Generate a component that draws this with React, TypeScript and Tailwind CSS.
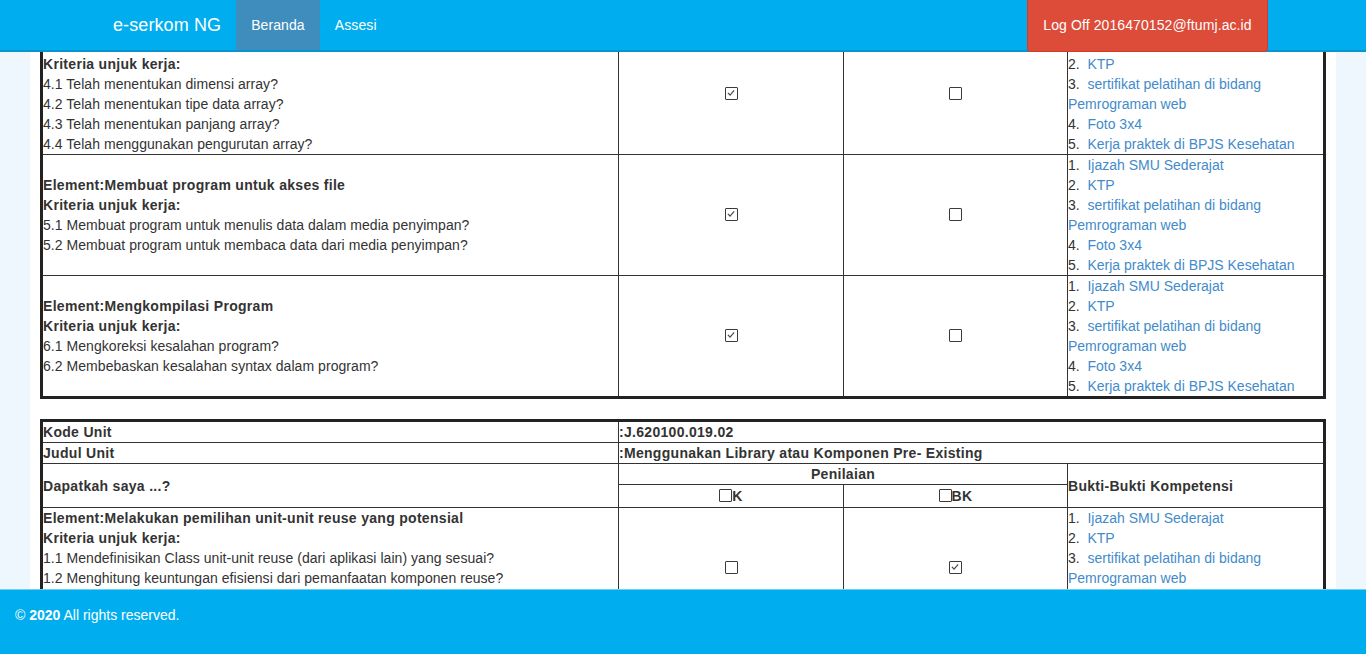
import React from "react";

type Row = {
  lines: { text: string; bold?: boolean }[];
  k: boolean;
  bk: boolean;
};

const evidence = [
  "Ijazah SMU Sederajat",
  "KTP",
  "sertifikat pelatihan di bidang Pemrograman web",
  "Foto 3x4",
  "Kerja praktek di BPJS Kesehatan",
];

const firstRows: Row[] = [
  {
    lines: [
      { text: "Element:Menggunakan array", bold: true },
      { text: "Kriteria unjuk kerja:", bold: true },
      { text: "4.1 Telah menentukan dimensi array?" },
      { text: "4.2 Telah menentukan tipe data array?" },
      { text: "4.3 Telah menentukan panjang array?" },
      { text: "4.4 Telah menggunakan pengurutan array?" },
    ],
    k: true,
    bk: false,
  },
  {
    lines: [
      { text: "Element:Membuat program untuk akses file", bold: true },
      { text: "Kriteria unjuk kerja:", bold: true },
      { text: "5.1 Membuat program untuk menulis data dalam media penyimpan?" },
      { text: "5.2 Membuat program untuk membaca data dari media penyimpan?" },
    ],
    k: true,
    bk: false,
  },
  {
    lines: [
      { text: "Element:Mengkompilasi Program", bold: true },
      { text: "Kriteria unjuk kerja:", bold: true },
      { text: "6.1 Mengkoreksi kesalahan program?" },
      { text: "6.2 Membebaskan kesalahan syntax dalam program?" },
    ],
    k: true,
    bk: false,
  },
];

const secondRows: Row[] = [
  {
    lines: [
      { text: "Element:Melakukan pemilihan unit-unit reuse yang potensial", bold: true },
      { text: "Kriteria unjuk kerja:", bold: true },
      { text: "1.1 Mendefinisikan Class unit-unit reuse (dari aplikasi lain) yang sesuai?" },
      { text: "1.2 Menghitung keuntungan efisiensi dari pemanfaatan komponen reuse?" },
      { text: "1.3 Menentukan komponen reuse yang sesuai?" },
      { text: "1.4 Mengidentifikasi lisensi komponen reuse?" },
    ],
    k: false,
    bk: true,
  },
];

function Box({ checked }: { checked?: boolean }) {
  return (
    <span className="inline-block h-[13px] w-[13px] border border-[#3b3b3b] bg-white rounded-[1px] align-middle">
      {checked && (
        <svg viewBox="0 0 13 13" className="h-[11px] w-[11px]">
          <path d="M2.2 5.8 L4.8 8.3 L9.6 2.8" fill="none" stroke="#4a4a4a" strokeWidth="1.4" />
        </svg>
      )}
    </span>
  );
}

function Evidence() {
  return (
    <>
      {evidence.map((item, i) => (
        <div key={item}>
          {i + 1}.&nbsp;&nbsp;<a className="text-[#428bca]">{item}</a>
        </div>
      ))}
    </>
  );
}

function BodyRow({ row }: { row: Row }) {
  return (
    <tr>
      <td className="border border-[#333] align-middle">
        {row.lines.map((l) => (
          <div key={l.text} className={l.bold ? "font-bold tracking-[0.3px]" : "tracking-[0.05px]"}>
            {l.text}
          </div>
        ))}
      </td>
      <td className="border border-[#333] pt-[1px] text-center align-middle">
        <span className="inline-flex items-center"><Box checked={row.k} /></span>
      </td>
      <td className="border border-[#333] pt-[1px] text-center align-middle">
        <span className="inline-flex items-center"><Box checked={row.bk} /></span>
      </td>
      <td className="border border-[#333] align-middle">
        <Evidence />
      </td>
    </tr>
  );
}

function Cols() {
  return (
    <colgroup>
      <col className="w-[577px]" />
      <col className="w-[225px]" />
      <col className="w-[224px]" />
      <col />
    </colgroup>
  );
}

export default function App() {
  return (
    <div className="flex h-[654px] flex-col overflow-hidden bg-[#edf7fd] font-['Liberation_Sans',Arial,sans-serif] text-[14px] leading-[20px] text-[#333]">
      <header className="h-[52px] shrink-0 border-b-2 border-[#0a94cc] bg-[#00aeef]">
        <div className="mx-auto flex h-[50px] w-[1170px] items-start px-[15px] tracking-[0.1px]">
          <a className="-ml-[15px] px-[15px] text-[18px] leading-[50px] text-white">e-serkom NG</a>
          <a className="bg-[#3e8dbd] px-[15px] leading-[50px] text-white">Beranda</a>
          <a className="px-[15px] leading-[50px] text-white">Assesi</a>
          <a className="-mr-[15px] ml-auto h-[52px] w-[241px] rounded-b-[4px] border border-t-0 border-[#d33a27] bg-[#dd4b39] text-center leading-[51px] text-white">
            Log Off 2016470152@ftumj.ac.id
          </a>
        </div>
      </header>

      <main className="min-h-0 flex-1 overflow-hidden px-[30px]">
        <div className="flow-root h-full bg-white px-[10px]">
          <div className="-mt-[21px]">
            <table className="mb-[20px] w-full table-fixed border-collapse border-[3px] border-[#222]">
              <Cols />
              <tbody>
                {firstRows.map((r) => (
                  <BodyRow key={r.lines[0].text} row={r} />
                ))}
              </tbody>
            </table>

            <table className="w-full table-fixed border-collapse border-[3px] border-[#222]">
              <Cols />
              <tbody className="font-bold tracking-[0.3px]">
                <tr>
                  <td className="border border-[#333]">Kode Unit</td>
                  <td colSpan={3} className="border border-[#333]">:J.620100.019.02</td>
                </tr>
                <tr>
                  <td className="border border-[#333]">Judul Unit</td>
                  <td colSpan={3} className="border border-[#333]">:Menggunakan Library atau Komponen Pre- Existing</td>
                </tr>
                <tr>
                  <td rowSpan={2} className="border border-[#333] align-middle">Dapatkah saya ...?</td>
                  <td colSpan={2} className="border border-[#333] text-center">Penilaian</td>
                  <td rowSpan={2} className="border border-[#333] align-middle">Bukti-Bukti Kompetensi</td>
                </tr>
                <tr>
                  <td className="h-[23px] border border-[#333] text-center align-bottom">
                    <span className="inline-flex items-end">
                      <span className="mb-[4px] inline-flex"><Box /></span>K
                    </span>
                  </td>
                  <td className="h-[23px] border border-[#333] text-center align-bottom">
                    <span className="inline-flex items-end">
                      <span className="mb-[4px] inline-flex"><Box /></span>BK
                    </span>
                  </td>
                </tr>
              </tbody>
              <tbody>
                {secondRows.map((r) => (
                  <BodyRow key={r.lines[0].text} row={r} />
                ))}
              </tbody>
            </table>
          </div>
        </div>
      </main>

      <footer className="h-[65px] shrink-0 border-t border-[#6fd0f5] bg-[#00aeef] px-[15px] pt-[15px] text-white">
        © <strong>2020</strong> All rights reserved.
      </footer>
    </div>
  );
}
